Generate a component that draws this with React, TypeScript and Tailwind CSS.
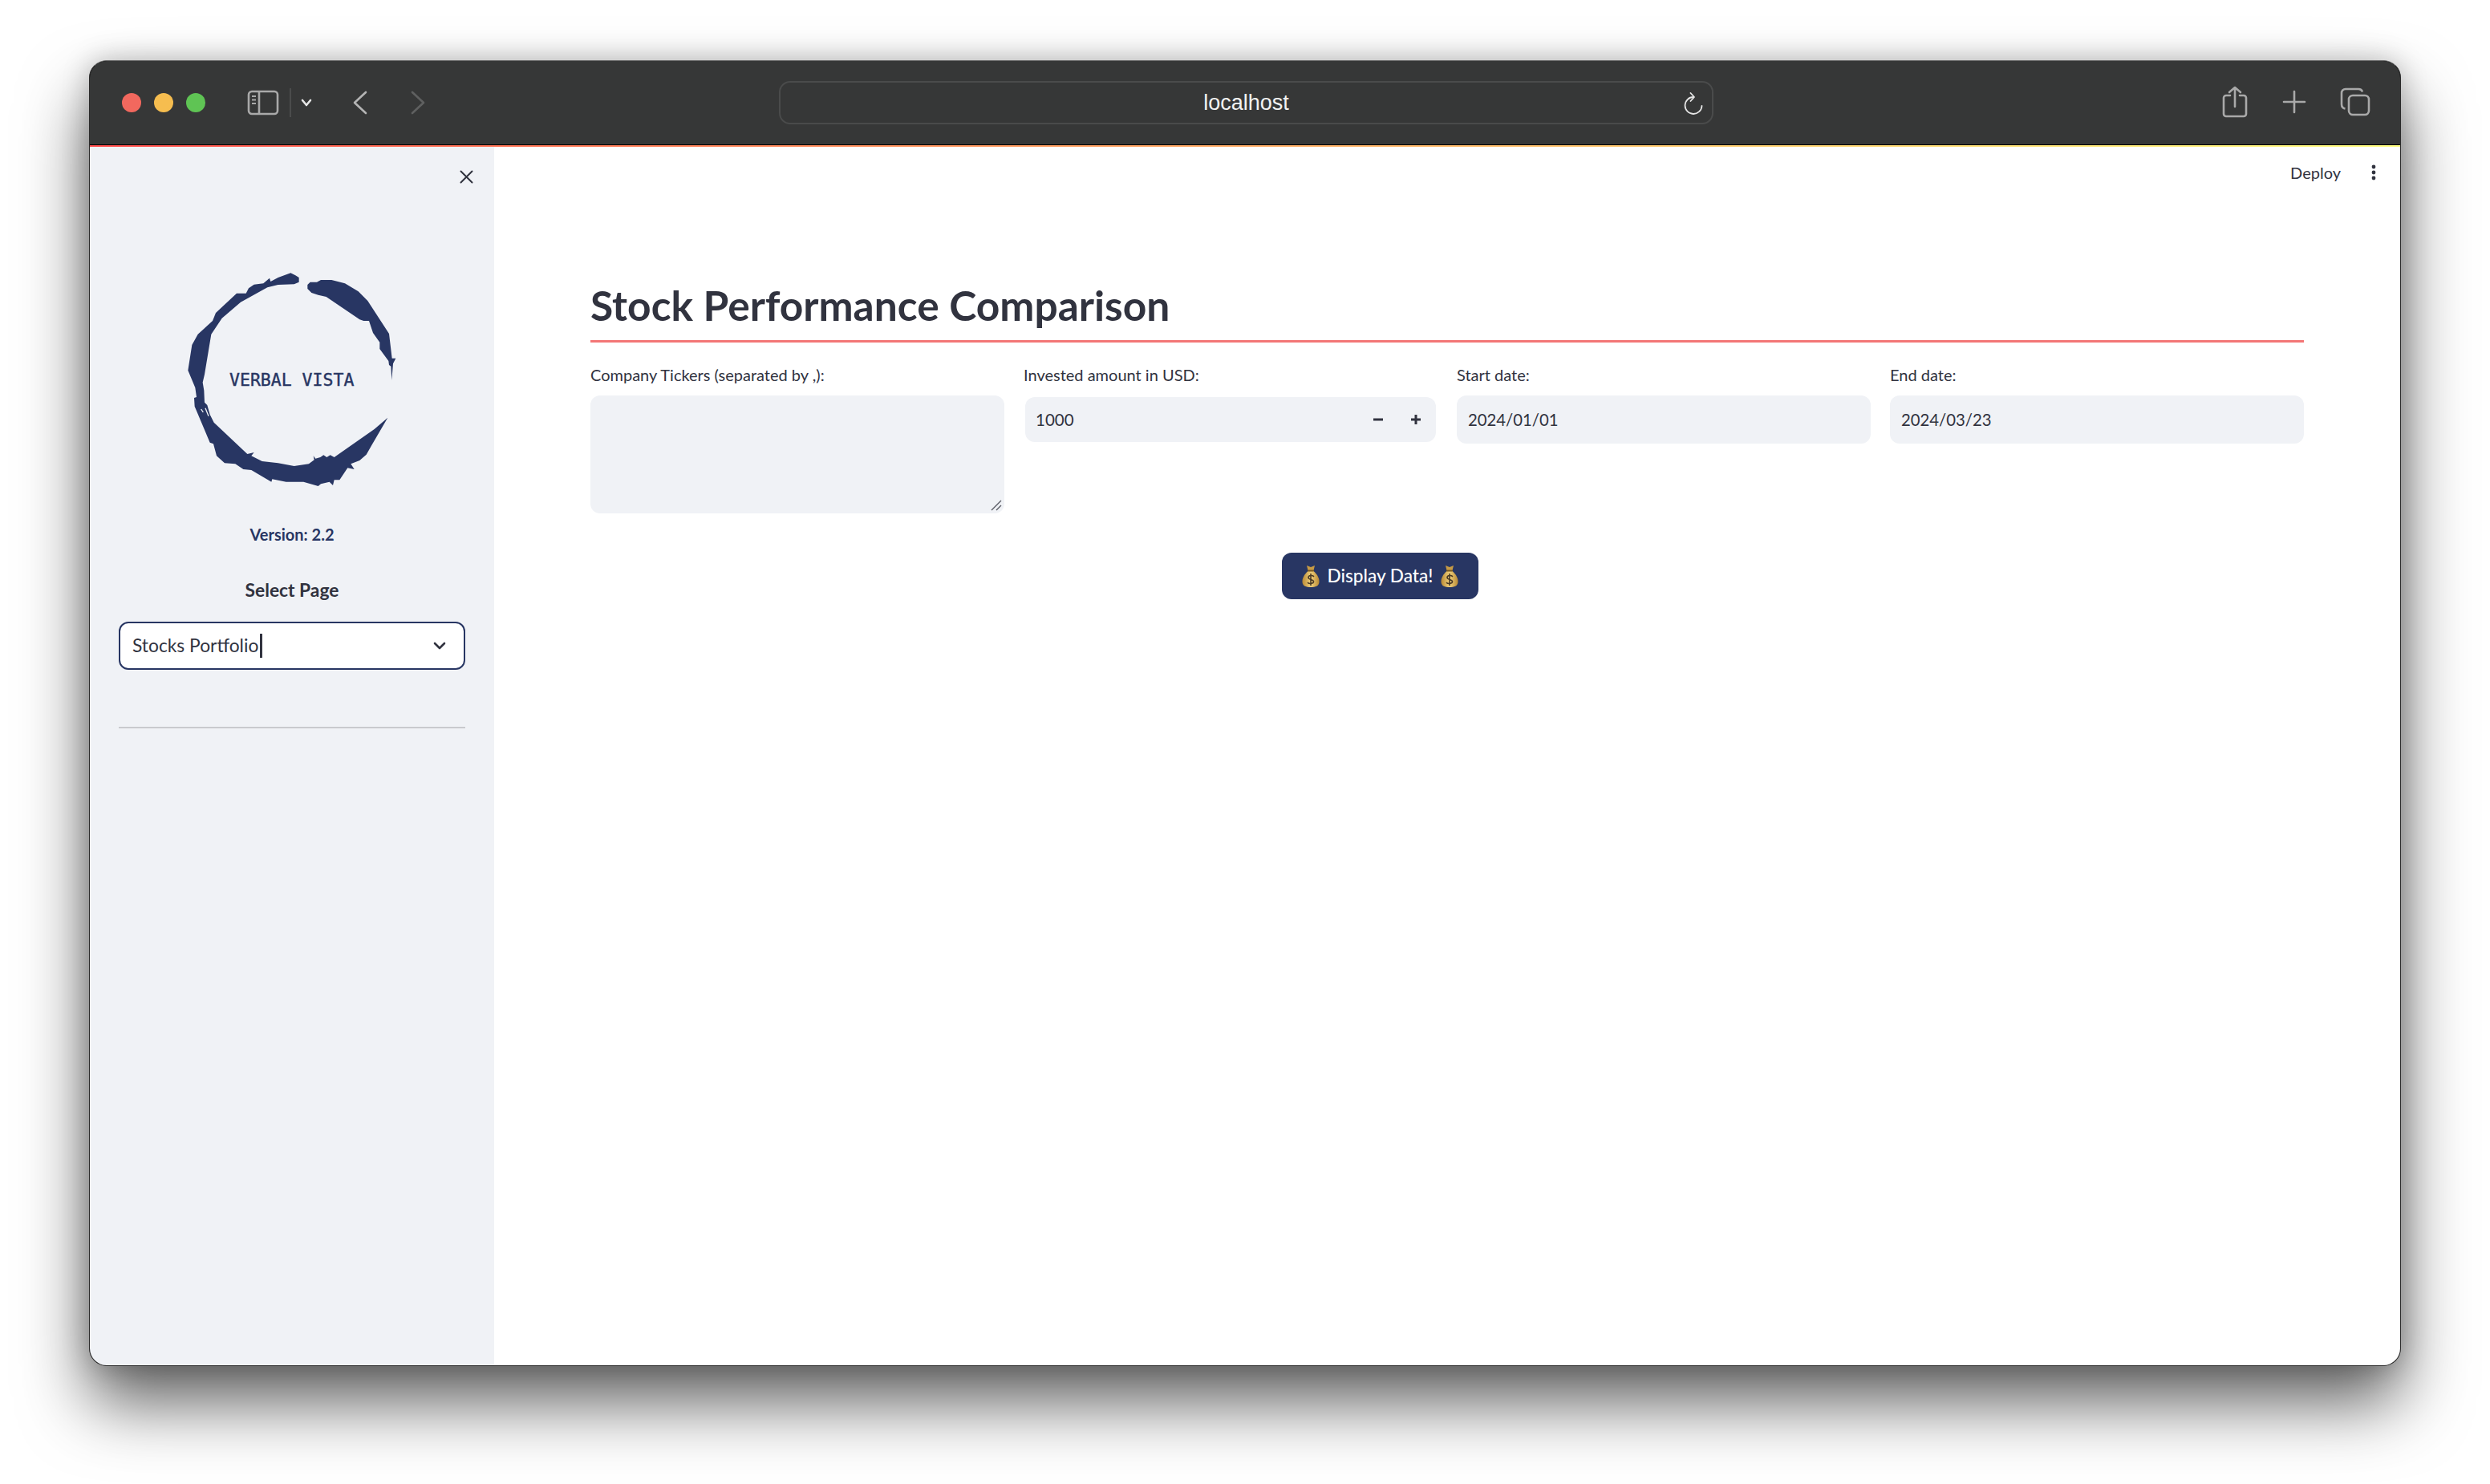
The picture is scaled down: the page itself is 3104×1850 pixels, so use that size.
import React from 'react';

const sans = "font-['Lato','Noto_Sans',sans-serif]";

function MoneyBag() {
  return (
    <svg className="w-[22px] h-[28px] shrink-0" viewBox="0 0 22 28">
      <defs>
        <linearGradient id="bagFill" x1="0" y1="0" x2="1" y2="0">
          <stop offset="0" stopColor="#b98a35" />
          <stop offset="0.5" stopColor="#f0cf7a" />
          <stop offset="1" stopColor="#b98a35" />
        </linearGradient>
      </defs>
      <path d="M6 1 L11 3 L16 1 L14.5 7 L7.5 7 Z" fill="#c79b45" />
      <path d="M7.5 8 C3 12 0 17 0.5 22 C1 26.5 5 28 11 28 C17 28 21 26.5 21.5 22 C22 17 19 12 14.5 8 Z" fill="url(#bagFill)" />
      <rect x="7" y="6.5" width="8" height="2" rx="1" fill="#7a5a22" />
      <path d="M14.5 14.5 C13.5 13 8 13 8 16 C8 19 14.5 18 14.5 21 C14.5 24 8.5 24 7.5 22.5 M11 11.5 V25.5" fill="none" stroke="#4a3a25" strokeWidth="1.6" strokeLinecap="round" />
    </svg>
  );
}

function Logo() {
  return (
    <div className="relative ml-[88px] w-[320px] h-[300px]">
      <svg className="w-full h-full" viewBox="0 0 960 900">
        <path
          fill="#283663"
          d="M518 78 L505 70 L487 61 L440 78 L412 93 L408 80 L385 100 L350 104 L330 118 L320 137 L285 137 L207 210 L195 240 L140 290 L118 330 L103 425 L130 490 L135 525 L126 528 L128 560 L185 695 L198 700 L210 745 L240 772 L280 775 L310 795 L340 798 L415 842 L418 832 L470 842 L535 842 L590 858 L600 850 L632 842 L645 855 L650 835 L670 835 L700 790 L725 795 L712 775 L745 762 L770 740 L790 705 L850 602 L800 645 L650 750 L635 742 L622 750 L610 742 L598 750 L580 755 L572 745 L575 760 L555 775 L500 783 L440 772 L380 765 L340 745 L350 732 L325 738 L200 620 L185 590 L175 555 L165 545 L163 500 L158 470 L165 440 L180 350 L190 290 L230 230 L300 170 L400 115 L440 105 L500 103 L518 95 Z"
        />
        <path
          fill="#283663"
          d="M550 105 L560 95 L585 95 L600 87 L640 87 L690 100 L740 130 L775 165 L855 288 L866 380 L880 380 L870 400 L865 462 L862 410 L855 405 L853 390 L820 345 L820 320 L795 285 L780 240 L760 240 L745 235 L620 150 L590 143 L565 135 L550 120 Z"
        />
        <path d="M152 570 L160 582 M168 566 L180 596" stroke="#f0f2f6" strokeWidth="4" fill="none" />
      </svg>
      <span className="absolute left-[86px] top-[143px] font-['DejaVu_Sans_Mono',monospace] text-[21.5px] leading-[22px] [-webkit-text-stroke:0.4px_#283663] text-[#283663] whitespace-pre">
        VERBAL VISTA
      </span>
    </div>
  );
}

function Sidebar() {
  return (
    <aside className="w-[504px] shrink-0 bg-[#f0f2f6] flex flex-col">
      <div className="h-[137px] flex justify-end pt-[29px] pr-[26px]">
        <svg className="w-[17px] h-[17px]" viewBox="0 0 17 17" fill="none" stroke="#31333f" strokeWidth="2" strokeLinecap="round">
          <path d="M1.5 1.5 L15.5 15.5 M15.5 1.5 L1.5 15.5" />
        </svg>
      </div>
      <Logo />
      <div className="mt-[33px] text-center text-[20px] leading-[26px] font-bold text-[#283663]">Version: 2.2</div>
      <div className="mt-[42px] text-center text-[22.8px] leading-[28px] font-bold text-[#31333f]">Select Page</div>
      <div className="mt-[26px] mx-[36px] h-[60px] rounded-[12px] border-2 border-[#283663] bg-white flex items-center pl-[15px] pr-[22px]">
        <span className="text-[22.8px] leading-[28px] -mt-[2px] text-[#31333f]">Stocks Portfolio</span>
        <span className="ml-[2px] w-[3px] h-[30px] bg-[#31333f]" />
        <svg className="ml-auto w-[16px] h-[10px]" viewBox="0 0 16 10" fill="none" stroke="#31333f" strokeWidth="2.6" strokeLinecap="round" strokeLinejoin="round">
          <path d="M2 2 L8 8 L14 2" />
        </svg>
      </div>
      <div className="mt-[71px] mx-[36px] h-[2px] bg-[#c9cace]" />
    </aside>
  );
}

function Label({ children }: { children: React.ReactNode }) {
  return <div className="h-[24px] text-[20px] leading-[22px] text-[#31333f] whitespace-nowrap">{children}</div>;
}

function MainPanel() {
  return (
    <main className="flex-1 bg-white px-[120px] flex flex-col">
      <div className="h-[64px] -mx-[120px] flex items-center justify-end pr-[30px] gap-[38px]">
        <span className="text-[20px] text-[#31333f]">Deploy</span>
        <svg className="w-[6px] h-[20px]" viewBox="0 0 6 20" fill="#31333f">
          <circle cx="3" cy="3" r="2.4" />
          <circle cx="3" cy="10" r="2.4" />
          <circle cx="3" cy="17" r="2.4" />
        </svg>
      </div>
      <h1 className="mt-[94px] h-[78px] text-[51.5px] leading-[78px] font-bold text-[#31333f]">
        Stock Performance Comparison
      </h1>
      <div className="h-[3px] bg-[#f37676] mt-[5px]" />
      <div className="mt-[29px] grid grid-cols-4 gap-6">
        <div>
          <Label>Company Tickers (separated by ,):</Label>
          <div className="relative mt-[13px] h-[147px] rounded-[12px] bg-[#f0f2f6]">
            <svg className="absolute right-[3px] bottom-[3px] w-[14px] h-[14px]" viewBox="0 0 14 14" fill="none" stroke="#5a5c66" strokeWidth="1.4">
              <path d="M1 13 L13 1 M7 13 L13 7" />
            </svg>
          </div>
        </div>
        <div>
          <Label>Invested amount in USD:</Label>
          <div className="mt-[15px] ml-[2px] w-[512px] h-[56px] rounded-[12px] bg-[#f0f2f6] flex items-center pl-[13px] pr-[18px]">
            <span className="text-[20.5px] text-[#31333f]">1000</span>
            <svg className="ml-auto w-[14px] h-[4px]" viewBox="0 0 14 4" fill="#31333f">
              <rect x="1" y="0.5" width="12" height="3" />
            </svg>
            <svg className="ml-[33px] w-[14px] h-[14px]" viewBox="0 0 14 14" fill="#31333f">
              <path d="M5.5 1 H8.5 V5.5 H13 V8.5 H8.5 V13 H5.5 V8.5 H1 V5.5 H5.5 Z" />
            </svg>
          </div>
        </div>
        <div>
          <Label>Start date:</Label>
          <div className="mt-[13px] h-[60px] rounded-[12px] bg-[#f0f2f6] flex items-center pl-[14px] text-[20.3px] text-[#31333f]">2024/01/01</div>
        </div>
        <div>
          <Label>End date:</Label>
          <div className="mt-[13px] h-[60px] rounded-[12px] bg-[#f0f2f6] flex items-center pl-[14px] text-[20.3px] text-[#31333f]">2024/03/23</div>
        </div>
      </div>
      <div className="mt-[49px] flex pl-[862px]">
        <button className="w-[245px] h-[58px] rounded-[12px] bg-[#283663] text-white text-[22.6px] font-medium flex items-center justify-center gap-[10px]">
          <MoneyBag />
          <span>Display Data!</span>
          <MoneyBag />
        </button>
      </div>
    </main>
  );
}

function Toolbar() {
  return (
    <header className="h-[104px] shrink-0 bg-[#363737] flex items-center pl-[40px]">
      <div className="flex gap-[16px]">
        <span className="w-[24px] h-[24px] rounded-full bg-[#f2685e]" />
        <span className="w-[24px] h-[24px] rounded-full bg-[#f6bd4f]" />
        <span className="w-[24px] h-[24px] rounded-full bg-[#5fc454]" />
      </div>
      <svg className="ml-[52px] w-[40px] h-[32px]" viewBox="0 0 40 32" fill="none" stroke="#a9a9a9" strokeWidth="2.6">
        <rect x="2" y="2" width="36" height="28" rx="4" />
        <path d="M15 2 V30" />
        <path d="M6 8 H11 M6 12.5 H11 M6 17 H11" strokeWidth="2" />
      </svg>
      <span className="ml-[13px] w-[2px] h-[36px] bg-[#4b4c4c]" />
      <svg className="ml-[12px] w-[14px] h-[10px]" viewBox="0 0 14 10" fill="none" stroke="#e6e6e6" strokeWidth="2.6" strokeLinecap="round" strokeLinejoin="round">
        <path d="M2 2 L7 8 L12 2" />
      </svg>
      <svg className="ml-[51px] w-[18px] h-[30px]" viewBox="0 0 18 30" fill="none" stroke="#b4b4b4" strokeWidth="2.6" strokeLinecap="round" strokeLinejoin="round">
        <path d="M16 2 L2 15 L16 28" />
      </svg>
      <svg className="ml-[54px] w-[18px] h-[30px]" viewBox="0 0 18 30" fill="none" stroke="#5f6060" strokeWidth="2.6" strokeLinecap="round" strokeLinejoin="round">
        <path d="M2 2 L16 15 L2 28" />
      </svg>
      <div className="ml-[441px] w-[1165px] h-[54px] rounded-[14px] border-2 border-[#4a4b4b] flex items-center relative">
        <span className="w-full text-center font-['Liberation_Sans',sans-serif] text-[27px] text-[#f2f2f2]">localhost</span>
        <svg className="absolute right-[10px] top-[12px] w-[26px] h-[30px]" viewBox="0 0 26 30" fill="none" stroke="#e4e4e4" strokeWidth="1.8" strokeLinecap="round" strokeLinejoin="round">
          <path d="M13 6 A10.5 10.5 0 1 0 23.5 17" />
          <path d="M9.5 1 L14 6 L9.5 11" />
        </svg>
      </div>
      <svg className="ml-[634px] w-[32px] h-[40px] -mt-[2px]" viewBox="0 0 32 40" fill="none" stroke="#a9a9a9" strokeWidth="2.6" strokeLinecap="round" strokeLinejoin="round">
        <path d="M10 12 H5 A3 3 0 0 0 2 15 V35 A3 3 0 0 0 5 38 H27 A3 3 0 0 0 30 35 V15 A3 3 0 0 0 27 12 H22" />
        <path d="M16 26 V2 M9 8 L16 2 L23 8" />
      </svg>
      <svg className="ml-[43px] w-[30px] h-[30px] -mt-[2px]" viewBox="0 0 30 30" fill="none" stroke="#a9a9a9" strokeWidth="2.6" strokeLinecap="round">
        <path d="M15 2 V28 M2 15 H28" />
      </svg>
      <svg className="ml-[42px] w-[38px] h-[36px] -mt-[2px]" viewBox="0 0 38 36" fill="none" stroke="#a9a9a9" strokeWidth="2.6">
        <rect x="11" y="10" width="25" height="24" rx="5" />
        <path d="M28 5.5 C27.4 3.4 25.8 2 23 2 H7 C4 2 2 4 2 7 V21 C2 24 4 26 6.5 26.5" />
      </svg>
    </header>
  );
}

export default function App() {
  return (
    <div className={`w-[3104px] h-[1850px] bg-white overflow-hidden pt-[75px] pl-[111px] ${sans}`}>
      <div className="w-[2882px] h-[1628px] rounded-[22px] bg-black border border-[#2b2b2b] border-t-[#6e6e6e] overflow-hidden flex flex-col shadow-[0_46px_84px_rgba(0,0,0,0.62),0_0_34px_rgba(0,0,0,0.22)]">
        <Toolbar />
        <div className="h-px shrink-0 bg-black" />
        <div className="h-[2px] shrink-0 bg-gradient-to-r from-[#ff4b4b] to-[#fffd80]" />
        <div className="flex-1 min-h-0 flex">
          <Sidebar />
          <MainPanel />
        </div>
      </div>
    </div>
  );
}
